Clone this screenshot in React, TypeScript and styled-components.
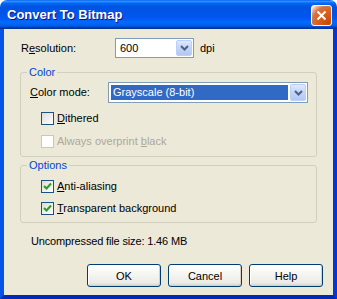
import React from "react";
import styled, { createGlobalStyle } from "styled-components";

const GlobalStyle = createGlobalStyle`
  html, body { margin: 0; padding: 0; background: #ffffff; }
  body { font-family: "Liberation Sans", Arial, sans-serif; font-size: 11px; }
  * { box-sizing: border-box; }
`;

const Window = styled.div`
  width: 337px;
  height: 299px;
  display: flex;
  flex-direction: column;
  font-family: "Liberation Sans", Arial, sans-serif;
  font-size: 11px;
  color: #000;
`;

const TitleBar = styled.div`
  height: 29px;
  flex: none;
  display: flex;
  align-items: flex-start;
  justify-content: space-between;
  padding: 0 5px 0 7px;
  border-radius: 7px 7px 0 0;
  background: linear-gradient(
    180deg,
    #0058ee 0%,
    #3593ff 4%,
    #288eff 6%,
    #127dff 8%,
    #036ffc 10%,
    #0262ee 14%,
    #0057e5 20%,
    #0054e3 24%,
    #0055eb 56%,
    #005bf5 66%,
    #026afe 76%,
    #0062ef 86%,
    #0052d6 92%,
    #0040ab 94%,
    #003092 100%
  );
`;

const Title = styled.span`
  margin-top: 7px;
  font-family: "Liberation Sans", Arial, sans-serif;
  font-weight: bold;
  font-size: 13px;
  line-height: 15px;
  color: #ffffff;
  text-shadow: 1px 1px #0f1089;
`;

const CloseButton = styled.button`
  margin-top: 5px;
  width: 21px;
  height: 21px;
  padding: 0;
  border: 1px solid #ffffff;
  border-radius: 3px;
  background: radial-gradient(
    circle at 90% 90%,
    #cc4600 0%,
    #dc6527 55%,
    #cd7546 70%,
    #ffccb2 90%,
    #ffffff 100%
  );
  display: flex;
  align-items: center;
  justify-content: center;
`;

const Client = styled.div`
  flex: 1;
  display: flex;
  flex-direction: column;
  background: #ece9d8;
  border-left: 4px solid #0553e6;
  border-right: 4px solid #0537d2;
  border-bottom: 4px solid #0329b6;
  padding-top: 9px;
`;

const TopRow = styled.div`
  display: flex;
  align-items: center;
  margin-left: 17px;
`;

const FieldLabel = styled.span<{ $w: number }>`
  width: ${(p) => p.$w}px;
  flex: none;
  line-height: 13px;
`;

const Key = styled.span`
  text-decoration: underline;
`;

const Combo = styled.div<{ $w: number; $h: number }>`
  width: ${(p) => p.$w}px;
  height: ${(p) => p.$h}px;
  flex: none;
  display: flex;
  border: 1px solid #7f9db9;
  background: #ffffff;
  padding: 1px;
`;

const ComboValue = styled.div<{ $selected?: boolean }>`
  flex: 1;
  display: flex;
  align-items: center;
  padding-left: ${(p) => (p.$selected ? "2px" : "3px")};
  margin: ${(p) => (p.$selected ? "1px 2px 1px 1px" : "0")};
  background: ${(p) => (p.$selected ? "#316ac5" : "transparent")};
  color: ${(p) => (p.$selected ? "#ffffff" : "#000000")};
  line-height: 13px;
`;

const DropButton = styled.div`
  width: 16px;
  flex: none;
  display: flex;
  align-items: center;
  justify-content: center;
  border: 1px solid #bad0f8;
  border-radius: 2px;
  background: linear-gradient(180deg, #dfe8fd 0%, #c6d6fa 45%, #b3c7f4 100%);
`;

const Unit = styled.span`
  margin-left: 6px;
  line-height: 13px;
`;

const Group = styled.fieldset<{ $mt: number; $pt: number; $pb: number }>`
  margin: ${(p) => p.$mt}px 16px 0 16px;
  padding: ${(p) => p.$pt}px 8px ${(p) => p.$pb}px 9px;
  border: 1px solid #d0d0bf;
  border-radius: 3px;
  min-inline-size: auto;
  display: flex;
  flex-direction: column;
`;

const Legend = styled.legend`
  color: #0046d5;
  padding: 0 2px;
  margin-left: -3px;
  line-height: 13px;
`;

const ModeRow = styled.div`
  display: flex;
  align-items: center;
`;

const CheckRow = styled.div<{ $mt: number; $disabled?: boolean }>`
  display: flex;
  align-items: center;
  gap: 3px;
  height: 13px;
  margin: ${(p) => p.$mt}px 0 0 11px;
  color: ${(p) => (p.$disabled ? "#aca899" : "#000000")};
  line-height: 13px;
`;

const Box = styled.span<{ $disabled?: boolean }>`
  width: 13px;
  height: 13px;
  flex: none;
  display: flex;
  align-items: center;
  justify-content: center;
  border: 1px solid ${(p) => (p.$disabled ? "#cac8bb" : "#1c5180")};
  background: ${(p) =>
    p.$disabled ? "#ffffff" : "linear-gradient(135deg, #dcdcd7 0%, #ffffff 100%)"};
`;

const Info = styled.div`
  margin: 12px 0 0 27px;
  line-height: 13px;
  letter-spacing: -0.15px;
`;

const ButtonRow = styled.div`
  display: flex;
  justify-content: flex-end;
  gap: 7px;
  margin-top: 16px;
  padding-right: 10px;
`;

const Button = styled.button`
  width: 74px;
  height: 23px;
  padding: 0;
  font-family: "Liberation Sans", Arial, sans-serif;
  font-size: 11px;
  color: #000;
  border: 1px solid #003c74;
  border-radius: 3px;
  background: linear-gradient(180deg, #ffffff 0%, #f6f6f3 40%, #ecebe6 85%, #d6d0c5 100%);
  box-shadow: inset -1px -1px 0 #d6d0c5, inset 1px 1px 0 #ffffff;
`;

const Chevron = () => (
  <svg width="9" height="6" viewBox="0 0 9 6">
    <path d="M1 1 L4.5 4.5 L8 1" fill="none" stroke="#4d6185" strokeWidth="2" />
  </svg>
);

const Check = () => (
  <svg width="9" height="9" viewBox="0 0 9 9">
    <path d="M1 4 L3.5 6.5 L8 1.5" fill="none" stroke="#21a121" strokeWidth="2" />
  </svg>
);

const CheckBox = ({
  checked,
  disabled,
  children,
  mt,
}: {
  checked?: boolean;
  disabled?: boolean;
  children: React.ReactNode;
  mt: number;
}) => (
  <CheckRow $mt={mt} $disabled={disabled}>
    <Box $disabled={disabled}>{checked && <Check />}</Box>
    <span>{children}</span>
  </CheckRow>
);

export default function App() {
  return (
    <>
      <GlobalStyle />
      <Window>
        <TitleBar>
          <Title>Convert To Bitmap</Title>
          <CloseButton aria-label="Close">
            <svg width="11" height="11" viewBox="0 0 11 11">
              <path d="M1.5 1.5 L9.5 9.5 M9.5 1.5 L1.5 9.5" stroke="#ffffff" strokeWidth="2" />
            </svg>
          </CloseButton>
        </TitleBar>
        <Client>
          <TopRow>
            <FieldLabel $w={94}>
              R<Key>e</Key>solution:
            </FieldLabel>
            <Combo $w={79} $h={20}>
              <ComboValue>600</ComboValue>
              <DropButton>
                <Chevron />
              </DropButton>
            </Combo>
            <Unit>dpi</Unit>
          </TopRow>

          <Group $mt={8} $pt={3} $pb={8}>
            <Legend>Color</Legend>
            <ModeRow>
              <FieldLabel $w={78}>
                <Key>C</Key>olor mode:
              </FieldLabel>
              <Combo $w={200} $h={21}>
                <ComboValue $selected>Grayscale (8-bit)</ComboValue>
                <DropButton>
                  <Chevron />
                </DropButton>
              </Combo>
            </ModeRow>
            <CheckBox mt={9}>
              <Key>D</Key>ithered
            </CheckBox>
            <CheckBox mt={10} disabled>
              Always overprint <Key>b</Key>lack
            </CheckBox>
          </Group>

          <Group $mt={2} $pt={8} $pb={7}>
            <Legend>Options</Legend>
            <CheckBox mt={0} checked>
              <Key>A</Key>nti-aliasing
            </CheckBox>
            <CheckBox mt={9} checked>
              <Key>T</Key>ransparent background
            </CheckBox>
          </Group>

          <Info>Uncompressed file size: 1.46 MB</Info>

          <ButtonRow>
            <Button>OK</Button>
            <Button>Cancel</Button>
            <Button>Help</Button>
          </ButtonRow>
        </Client>
      </Window>
    </>
  );
}
